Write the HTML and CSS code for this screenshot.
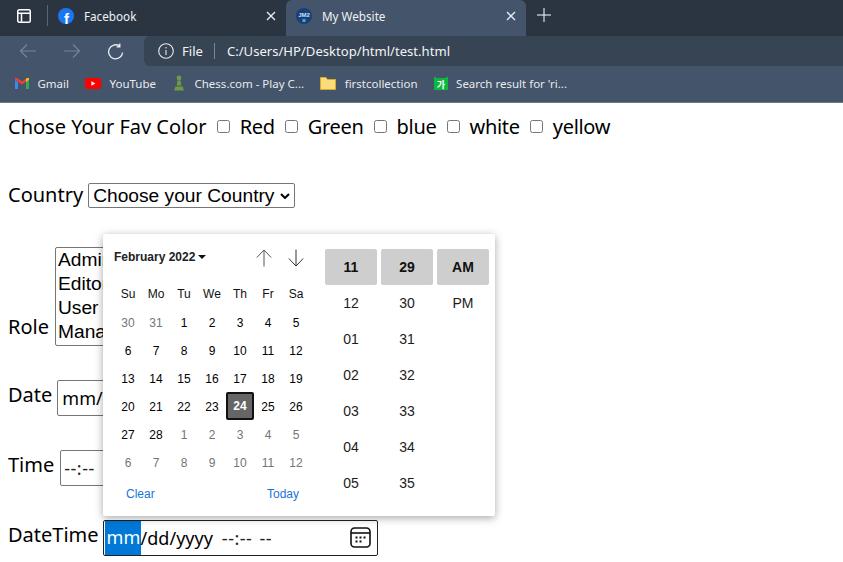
FILE: index.html
```html
<!DOCTYPE html>
<html lang="en">
<head>
<meta charset="utf-8">
<title>My Website</title>
<link rel="stylesheet" href="styles.css">
</head>
<body>
<header class="chrome">
  <div class="tabstrip">
    <div class="tab-search">
      <svg width="16" height="16" viewBox="0 0 16 16" fill="none" stroke="#fff" stroke-width="1.5"><rect x="1.75" y="1.75" width="12.5" height="12.5" rx="1.5"/><path d="M2 5.25h12M5.5 5.25v8.5"/></svg>
    </div>
    <div class="tab-sep"></div>
    <div class="tab">
      <svg class="fav" width="16" height="16" viewBox="0 0 16 16"><circle cx="8" cy="8" r="8" fill="#1a77f2"/><text x="8.4" y="15.5" class="fb-f">f</text></svg>
      <span class="tab-title">Facebook</span>
      <svg class="close" width="10" height="10" viewBox="0 0 10 10" stroke="#e8eaed" stroke-width="1.4"><path d="M1 1l8 8M9 1l-8 8"/></svg>
    </div>
    <div class="tab tab-active">
      <svg class="fav" width="16" height="16" viewBox="0 0 16 16"><circle cx="8" cy="8" r="8" fill="#17407a"/><text x="8" y="8.5" class="jm">JM2</text><circle cx="8" cy="12.5" r="1.8" fill="#4aa3c8"/></svg>
      <span class="tab-title">My Website</span>
      <svg class="close" width="10" height="10" viewBox="0 0 10 10" stroke="#e8eaed" stroke-width="1.4"><path d="M1 1l8 8M9 1l-8 8"/></svg>
    </div>
    <svg class="newtab" width="14" height="14" viewBox="0 0 14 14" stroke="#fff" stroke-width="1"><path d="M7 0v14M0 7h14"/></svg>
  </div>
  <div class="toolbar">
    <div class="nav">
      <svg width="18" height="16" viewBox="0 0 18 16" fill="none" stroke="#76849a" stroke-width="1.2"><path d="M17 8H1.5M8 1.5L1.500 8 8 14.5"/></svg>
      <svg width="18" height="16" viewBox="0 0 18 16" fill="none" stroke="#76849a" stroke-width="1.2"><path d="M1 8h15.5M10 1.5L16.5 8 10 14.5"/></svg>
      <svg class="reload" width="18" height="18" viewBox="0 0 18 18" fill="none" stroke="#eceff3" stroke-width="1.3"><path d="M15.6 9.5A7 7 0 1 1 12.6 3M12.8 .6v3.2H9.6"/></svg>
    </div>
    <div class="urlbar">
      <svg width="16" height="16" viewBox="0 0 16 16" fill="none" stroke="#e8eaed" stroke-width="1.1"><circle cx="8" cy="8" r="7.3"/><path d="M8 7v5M8 4v1.4"/></svg>
      <span class="scheme">File</span>
      <span class="url-sep"></span>
      <span class="url">C:/Users/HP/Desktop/html/test.html</span>
    </div>
  </div>
  <div class="bookmarks">
    <div class="bm">
      <svg width="14" height="11" viewBox="0 0 14 11"><path d="M0 2v9h3V4z" fill="#4285f4"/><path d="M14 2v9h-3V4z" fill="#34a853"/><path d="M0 1.5L7 6.5l7-5V0h-2L7 3.5 2 0H0z" fill="#ea4335"/><path d="M11 4l3-2V0h-2l-1 .8z" fill="#fbbc04"/></svg>
      <span>Gmail</span>
    </div>
    <div class="bm">
      <svg width="16" height="11" viewBox="0 0 16 11"><rect width="16" height="11" rx="2.5" fill="#f00"/><path d="M6.4 3.2v4.6l4-2.3z" fill="#fff"/></svg>
      <span>YouTube</span>
    </div>
    <div class="bm">
      <svg width="14" height="16" viewBox="0 0 14 16" fill="#6f9a45"><circle cx="7" cy="3" r="2.4"/><path d="M5.400 5.500h3.200l.7 5H4.700zM3.500 11.500h7L12 15.500H2z"/></svg>
      <span>Chess.com - Play C...</span>
    </div>
    <div class="bm">
      <svg width="16" height="14" viewBox="0 0 16 14"><path d="M.5 1.500h5.500l1.500 2h8v10H.5z" fill="#fbdc7c" stroke="#d9a92e"/></svg>
      <span>firstcollection</span>
    </div>
    <div class="bm">
      <svg width="14" height="14" viewBox="0 0 14 14"><path d="M0 1h2v1h10V1h2v13H0z" fill="#0bb83f"/><text x="7" y="11.500" class="ko">가</text></svg>
      <span>Search result for 'ri...</span>
    </div>
  </div>
</header>

<main class="page">
  <div class="row row-colors">
    <span>Chose Your Fav Color</span>
    <label class="check"><input type="checkbox">Red</label>
    <label class="check"><input type="checkbox">Green</label>
    <label class="check"><input type="checkbox">blue</label>
    <label class="check"><input type="checkbox">white</label>
    <label class="check"><input type="checkbox">yellow</label>
  </div>
  <div class="row row-country">
    <span class="country-label">Country</span>
    <div class="select">
      <span>Choose your Country</span>
      <svg width="10" height="6" viewBox="0 0 10 6" fill="none" stroke="#000" stroke-width="2"><path d="M1 1l4 4 4-4"/></svg>
    </div>
  </div>
  <div class="row row-role">
    <span>Role</span>
    <div class="listbox">
      <div>Admin</div>
      <div>Editor</div>
      <div>User</div>
      <div>Manager</div>
    </div>
  </div>
  <div class="row row-field">
    <span class="flabel">Date</span>
    <div class="field field-date">mm/dd/yyyy</div>
  </div>
  <div class="row row-field row-time">
    <span class="flabel">Time</span>
    <div class="field field-time"><span class="dashes">--:--</span></div>
  </div>
  <div class="row row-field row-dt">
    <span class="flabel">DateTime</span>
    <div class="field field-dt">
      <span class="seg">mm</span><span>/dd/yyyy</span><span class="dashes dt-time">--:--</span><span class="dashes dt-ampm">--</span>
      <svg class="cal" width="21" height="21" viewBox="0 0 21 21" fill="none" stroke="#111" stroke-width="1.600"><rect x="1" y="1" width="19" height="19" rx="3.500"/><path d="M1 6h19"/><path d="M5.500 10.500h2M9.500 10.500h2M13.500 10.500h2M5.500 14.500h2M9.500 14.500h2" stroke-width="2"/></svg>
    </div>
  </div>
</main>

<section class="picker">
  <div class="cal-pane">
    <div class="cal-head">
      <span class="month">February 2022</span>
      <span class="caret"></span>
      <svg class="arrow-up" width="16" height="18" viewBox="0 0 16 18" fill="none" stroke-width="1"><path d="M8 17.500V1M.8 8.500L8 1l7.200 7.500" stroke="#555"/></svg>
      <svg class="arrow-down" width="16" height="18" viewBox="0 0 16 18" fill="none" stroke-width="1"><path d="M8 .5V17M.8 9.500L8 17l7.200-7.500" stroke="#333"/></svg>
    </div>
    <div class="grid">
      <span class="wd">Su</span><span class="wd">Mo</span><span class="wd">Tu</span><span class="wd">We</span><span class="wd">Th</span><span class="wd">Fr</span><span class="wd">Sa</span>
      <span class="off">30</span><span class="off">31</span><span>1</span><span>2</span><span>3</span><span>4</span><span>5</span>
      <span>6</span><span>7</span><span>8</span><span>9</span><span>10</span><span>11</span><span>12</span>
      <span>13</span><span>14</span><span>15</span><span>16</span><span>17</span><span>18</span><span>19</span>
      <span>20</span><span>21</span><span>22</span><span>23</span><span class="today">24</span><span>25</span><span>26</span>
      <span>27</span><span>28</span><span class="off">1</span><span class="off">2</span><span class="off">3</span><span class="off">4</span><span class="off">5</span>
      <span class="off">6</span><span class="off">7</span><span class="off">8</span><span class="off">9</span><span class="off">10</span><span class="off">11</span><span class="off">12</span>
    </div>
    <div class="cal-foot"><span>Clear</span><span>Today</span></div>
  </div>
  <div class="time-pane">
    <div class="tcol"><span class="sel">11</span><span>12</span><span>01</span><span>02</span><span>03</span><span>04</span><span>05</span></div>
    <div class="tcol"><span class="sel">29</span><span>30</span><span>31</span><span>32</span><span>33</span><span>34</span><span>35</span></div>
    <div class="tcol"><span class="sel">AM</span><span>PM</span></div>
  </div>
</section>
</body>
</html>
```
FILE: styles.css
```css
html, body {
  margin: 0;
  padding: 0;
  height: 100%;
  overflow: hidden;
  background: #fff;
}
body {
  position: relative;
  font-family: "Noto Sans", "Open Sans", sans-serif;
  font-size: 20px;
  color: #000;
}

/* browser chrome */
.chrome {
  font-family: "Noto Sans", "Open Sans", sans-serif;
  color: #e8eaed;
  font-size: 11.5px;
}
.tabstrip {
  height: 36px;
  background: #2b3541;
  display: flex;
  align-items: center;
}
.tab-search {
  width: 47px;
  display: flex;
  padding: 0 0 5px 16px;
  box-sizing: border-box;
}
.tab-sep {
  width: 1px;
  height: 21px;
  margin-bottom: 5px;
  background: #5a6573;
}
.tab {
  width: 238px;
  height: 36px;
  box-sizing: border-box;
  display: flex;
  align-items: center;
  padding: 0 10px 4px;
}
.tab-active {
  width: 240px;
  background: #44546a;
  border-radius: 6px 6px 0 0;
}
.tab-title {
  flex: 1;
  margin-left: 10px;
  font-size: 11.7px;
  color: #f0f2f5;
}
.fb-f {
  font-family: "Liberation Sans", sans-serif;
  font-weight: 700;
  font-size: 15px;
  fill: #fff;
  text-anchor: middle;
}
.jm {
  font-family: "Liberation Sans", sans-serif;
  font-weight: 700;
  font-size: 6px;
  fill: #cfe0ef;
  text-anchor: middle;
}
.ko {
  font-family: "Noto Sans CJK KR", sans-serif;
  font-size: 9px;
  font-weight: 700;
  fill: #fff;
  text-anchor: middle;
}
.newtab {
  margin: 0 0 6px 11px;
}
.toolbar {
  height: 30px;
  background: #44546a;
  display: flex;
}
.nav {
  width: 144px;
  display: flex;
  align-items: center;
  gap: 26px;
  padding-left: 19px;
  box-sizing: border-box;
}
.reload {
  margin: 1px 0 0 0;
}
.urlbar {
  flex: 1;
  background: #374454;
  border-radius: 6px 0 0 6px;
  display: flex;
  align-items: center;
  padding-left: 14px;
  font-size: 13.1px;
  color: #f1f3f5;
}
.scheme {
  margin-left: 8px;
}
.url-sep {
  width: 1px;
  height: 16px;
  background: #7a8696;
  margin: 0 12px 0 11px;
}
.bookmarks {
  background: #44546a;
  border-bottom: 1px solid #6c7686;
  box-sizing: border-box;
  height: 37px;
  display: flex;
  align-items: center;
  padding: 0 0 2px 15px;
  gap: 16px;
}
.bm {
  display: flex;
  align-items: center;
  gap: 8.5px;
  color: #e8eaed;
}

/* page */
.page {
  padding: 9px 8px 0;
}
.row {
  display: flex;
  align-items: center;
}
.row-colors {
  height: 28px;
  gap: 9.5px;
}
.check {
  display: flex;
  align-items: center;
  letter-spacing: -0.3px;
}
.check input {
  width: 13px;
  height: 13px;
  margin: 0 9.5px 0 1px;
}
.row-country {
  margin-top: 43px;
  gap: 5px;
  height: 25px;
}
.country-label {
  margin-bottom: 2px;
}
.select {
  font-family: "Liberation Sans", sans-serif;
  font-size: 19.2px;
  height: 25px;
  width: 207px;
  box-sizing: border-box;
  padding: 0 4px;
  background: #fff;
  border: 1px solid #767676;
  border-radius: 2px;
  color: #000;
  display: flex;
  align-items: center;
  justify-content: space-between;
  white-space: nowrap;
}
.row-role {
  margin-top: 39px;
  align-items: flex-end;
  gap: 6px;
}
.row-role > span {
  line-height: 28px;
  margin-bottom: 5px;
}
.listbox {
  width: 150px;
  height: 99px;
  box-sizing: border-box;
  border: 1px solid #767676;
  border-radius: 2px;
  font-family: "Liberation Sans", sans-serif;
  font-size: 19.2px;
  line-height: 24px;
  padding: 0 2px;
  overflow: hidden;
}
.row-field {
  margin-top: 34px;
  height: 36px;
  gap: 5px;
}
.flabel {
  margin-bottom: 7px;
}
.row-time {
  gap: 6px;
}
.row-dt {
  gap: 4px;
}
.field {
  height: 36px;
  box-sizing: border-box;
  border: 1px solid #767676;
  border-radius: 2px;
  display: flex;
  align-items: center;
  padding-left: 3px;
  font-size: 18px;
}
.field-date {
  width: 150px;
  padding-left: 4px;
  padding-bottom: 1px;
}
.field-time {
  width: 150px;
}
.field-dt {
  width: 275px;
  border-color: #222;
  position: relative;
  padding-left: 1px;
}
.seg {
  background: #0078d7;
  color: #fff;
  height: 34px;
  line-height: 32px;
  padding: 0 0 0 2px;
  width: 36px;
  box-sizing: border-box;
  flex: none;
}
.dashes {
  letter-spacing: 0.5px;
  color: #222;
}
.dt-time {
  margin-left: 9px;
}
.dt-ampm {
  margin-left: 7px;
}
.cal {
  position: absolute;
  right: 6px;
  top: 6px;
}

/* picker */
.picker {
  position: absolute;
  left: 103px;
  top: 234px;
  width: 392px;
  height: 282px;
  background: #fff;
  border-radius: 2px;
  box-shadow: 0 2px 8px rgba(0, 0, 0, 0.35);
  display: flex;
  font-family: "Liberation Sans", sans-serif;
  font-size: 12px;
}
.cal-pane {
  width: 222px;
  box-sizing: border-box;
  padding: 0 0 0 11px;
}
.cal-head {
  height: 46px;
  display: flex;
  align-items: center;
  box-sizing: border-box;
}
.month {
  font-weight: 700;
  color: #222;
}
.caret {
  width: 0;
  height: 0;
  border-left: 4px solid transparent;
  border-right: 4px solid transparent;
  border-top: 4px solid #111;
  margin-left: 3px;
}
.arrow-up {
  margin: 2px 0 0 50px;
}
.arrow-down {
  margin: 2px 0 0 16px;
}
.grid {
  display: grid;
  grid-template-columns: repeat(7, 28px);
  grid-auto-rows: 28px;
}
.grid span {
  display: flex;
  align-items: center;
  justify-content: center;
  box-sizing: border-box;
  padding-top: 2px;
}
.grid .wd {
  color: #111;
  padding-top: 0;
}
.grid .off {
  color: #757575;
}
.grid .today {
  background: #666;
  border: 2px solid #111;
  border-radius: 2px;
  color: #fff;
  font-weight: 700;
  padding-top: 0;
}
.cal-foot {
  display: flex;
  justify-content: space-between;
  color: #1a73d9;
  margin-top: 11px;
  padding: 0 0 0 12px;
  width: 185px;
  box-sizing: border-box;
}
.time-pane {
  display: flex;
  gap: 4px;
  padding-top: 15px;
}
.tcol {
  width: 52px;
  display: flex;
  flex-direction: column;
  font-size: 14px;
}
.tcol span {
  height: 36px;
  flex: none;
  display: flex;
  align-items: center;
  justify-content: center;
  color: #1c1c1c;
}
.tcol .sel {
  background: #cecece;
  border-radius: 2px;
  font-weight: 700;
  color: #111;
}
```
